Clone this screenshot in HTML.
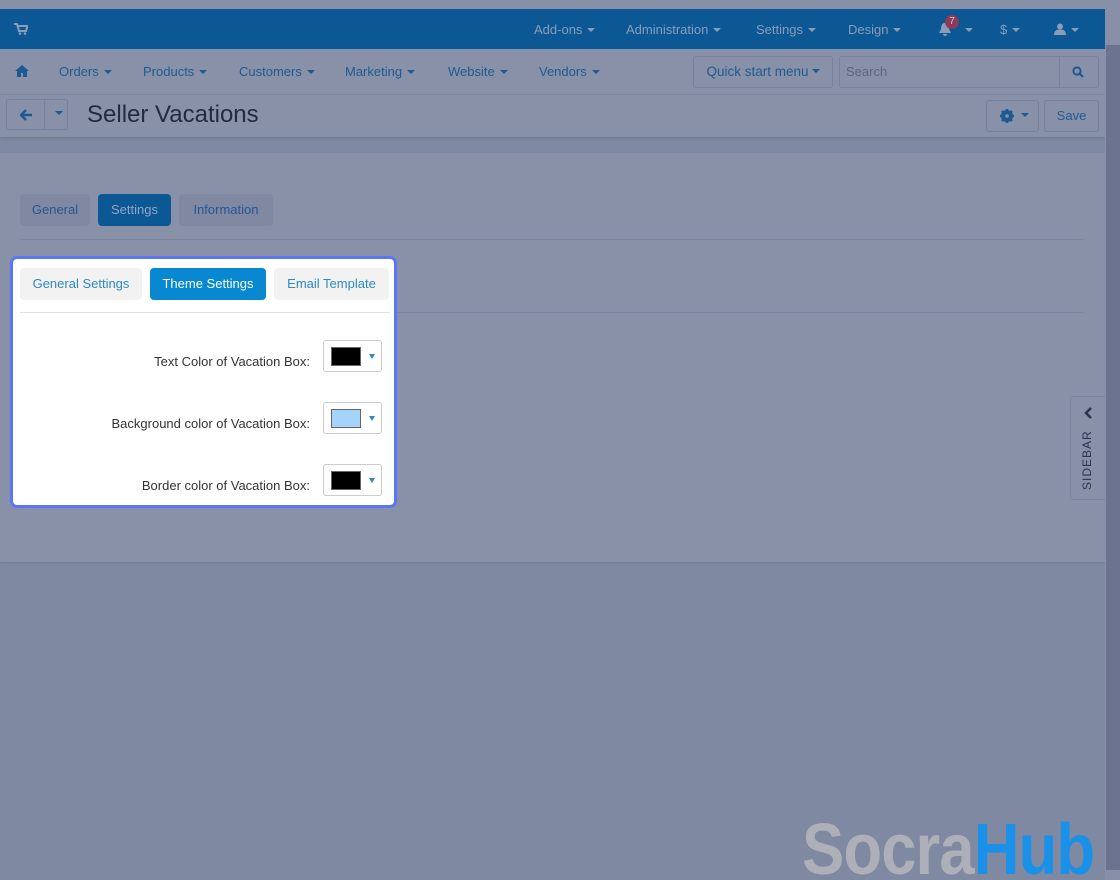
<!DOCTYPE html>
<html><head><meta charset="utf-8"><style>
*{box-sizing:border-box;margin:0;padding:0}
html,body{width:1120px;height:880px;overflow:hidden}
body{background:#7f89a1;font-family:"Liberation Sans",sans-serif;font-size:13px;position:relative}
.abs{position:absolute}
.top{left:0;top:0;width:1105px;height:9px;background:#8790a6}
.bar{left:0;top:9px;width:1105px;height:40px;background:#0b5894;color:#8a9cb8}
.bar span{position:absolute;top:13px;font-size:13px}
.car{display:inline-block;width:0;height:0;border-left:4px solid transparent;border-right:4px solid transparent;border-top:4px solid currentColor;vertical-align:middle;margin-left:5px;margin-top:-2px}
.nav{left:0;top:49px;width:1105px;height:46px;background:#8891a8;border-bottom:1px solid #8189a1;color:#1d5a94}
.nav span{position:absolute;top:15px}
.title{left:0;top:95px;width:1105px;height:42px;background:#8891a8;box-shadow:0 2px 3px rgba(0,0,0,.1)}
.btn{position:absolute;border:1px solid #7880a0;border-radius:3px;color:#1d5a94}
.content{left:0;top:153px;width:1105px;height:409px;background:#8891a8;box-shadow:0 1px 2px rgba(0,0,0,.1)}
.tab{position:absolute;top:194px;height:32px;border-radius:4px;background:#8189a2;color:#1f5893;line-height:32px;text-align:center}
.panel{left:10px;top:256px;width:387px;height:252px;background:#fff;border:3px solid #5a76f6;border-radius:7px}
.st{position:absolute;top:9px;height:32px;border-radius:4px;background:#f2f2f2;color:#2f8ac6;line-height:32px;text-align:center}
.lbl{position:absolute;right:84px;color:#333;font-size:13px}
.cp{position:absolute;left:310px;width:59px;height:32px;border:1px solid #ccc;border-radius:3px;background:#fff}
.cp i{position:absolute;left:7px;top:6px;width:30px;height:19px;border:1px solid #666}
.cp b{position:absolute;left:45px;top:13px;border-left:3px solid transparent;border-right:3px solid transparent;border-top:5px solid #2f8ac6}
.sb{left:1106px;top:45px;width:14px;height:825px;background:#6b7390}
</style></head><body>
<div class="abs top"></div>
<div class="abs bar">
<svg class="abs" style="left:14px;top:14px" width="14" height="12" viewBox="0 0 14 12"><path d="M0 1h3l2 7h7l1.5-5H4" fill="none" stroke="#8a9cb8" stroke-width="2"/><circle cx="6" cy="10.5" r="1.3" fill="#8a9cb8"/><circle cx="11" cy="10.5" r="1.3" fill="#8a9cb8"/></svg>
<span style="left:534px">Add-ons<i class="car"></i></span>
<span style="left:626px">Administration<i class="car"></i></span>
<span style="left:756px">Settings<i class="car"></i></span>
<span style="left:848px">Design<i class="car"></i></span>
<svg class="abs" style="left:938px;top:13px" width="14" height="15" viewBox="0 0 14 15"><path d="M7 1C4 1 3 4 3 7L1 11h12l-2-4C11 4 10 1 7 1zM5 12a2 2 0 004 0z" fill="#8a9cb8"/></svg>
<div class="abs" style="left:945px;top:6px;width:14px;height:14px;border-radius:7px;background:#8c3a57;color:#ccc;font-size:10px;text-align:center;line-height:14px">7</div>
<span style="left:960px"><i class="car"></i></span>
<span style="left:1000px">$<i class="car"></i></span>
<svg class="abs" style="left:1054px;top:14px" width="12" height="12" viewBox="0 0 12 12"><circle cx="6" cy="3.5" r="3" fill="#8a9cb8"/><path d="M0 12c0-4 2-5.5 6-5.5s6 1.5 6 5.5z" fill="#8a9cb8"/></svg>
<span style="left:1066px"><i class="car"></i></span>
</div>
<div class="abs nav">
<svg class="abs" style="left:15px;top:16px" width="14" height="12" viewBox="0 0 14 12"><path d="M7 0L0 6h2v6h4V8h2v4h4V6h2z" fill="#1d5a94"/></svg>
<span style="left:59px">Orders<i class="car"></i></span>
<span style="left:143px">Products<i class="car"></i></span>
<span style="left:239px">Customers<i class="car"></i></span>
<span style="left:345px">Marketing<i class="car"></i></span>
<span style="left:448px">Website<i class="car"></i></span>
<span style="left:539px">Vendors<i class="car"></i></span>
<div class="btn" style="left:693px;top:7px;width:140px;height:32px;line-height:30px;text-align:center;font-size:13.5px">Quick start menu<i class="car" style="margin-left:3px"></i></div>
<div class="btn" style="left:839px;top:7px;width:260px;height:32px;color:#5d6780;line-height:30px;padding-left:6px">Search</div>
<div class="abs" style="left:1059px;top:7px;width:1px;height:32px;background:#7880a0"></div>
<svg class="abs" style="left:1072px;top:17px" width="12" height="12" viewBox="0 0 12 12"><circle cx="5" cy="5" r="3.6" fill="none" stroke="#1d5a94" stroke-width="2"/><path d="M7.5 7.5l3.5 3.5" stroke="#1d5a94" stroke-width="2.2"/></svg>
</div>
<div class="abs title">
<div class="btn" style="left:6px;top:4px;width:62px;height:31px"></div>
<div class="abs" style="left:44px;top:5px;width:1px;height:30px;background:#7880a0"></div>
<svg class="abs" style="left:20px;top:14px" width="13" height="12" viewBox="0 0 13 12"><path d="M6 1L1 6l5 5M1.5 6H12" fill="none" stroke="#1d5a94" stroke-width="2.5"/></svg>
<i class="car abs" style="left:50px;top:18px;color:#1d5a94"></i>
<div class="abs" style="left:87px;top:6px;font-size:24px;color:#222c40">Seller Vacations</div>
<div class="btn" style="left:986px;top:5px;width:53px;height:32px"></div>
<svg class="abs" style="left:1000px;top:14px" width="14" height="14" viewBox="0 0 14 14"><circle cx="7" cy="7" r="4.5" fill="none" stroke="#1d5a94" stroke-width="3"/><path d="M7 0v14M0 7h14M2 2l10 10M12 2L2 12" stroke="#1d5a94" stroke-width="2.4"/><circle cx="7" cy="7" r="1.8" fill="#8891a8"/></svg>
<i class="car abs" style="left:1016px;top:20px;color:#1d5a94"></i>
<div class="btn" style="left:1044px;top:5px;width:55px;height:32px;line-height:30px;text-align:center">Save</div>
</div>
<div class="abs content"></div>
<div class="tab" style="left:20px;width:70px">General</div>
<div class="tab" style="left:98px;width:73px;background:#0b5894;color:#8ea7c5">Settings</div>
<div class="tab" style="left:179px;width:94px">Information</div>
<div class="abs" style="left:20px;top:239px;width:1064px;height:1px;background:#7c86a0"></div>
<div class="abs" style="left:20px;top:312px;width:1064px;height:1px;background:#7c86a0"></div>
<div class="abs panel">
<div class="st" style="left:7px;width:122px">General Settings</div>
<div class="st" style="left:137px;width:116px;background:#0788d0;color:#fff">Theme Settings</div>
<div class="st" style="left:261px;width:115px">Email Template</div>
<div class="abs" style="left:7px;top:53px;width:370px;height:1px;background:#dde3ea"></div>
<div class="lbl" style="top:95px">Text Color of Vacation Box:</div>
<div class="cp" style="top:81px"><i style="background:#000"></i><b></b></div>
<div class="lbl" style="top:157px">Background color of Vacation Box:</div>
<div class="cp" style="top:143px"><i style="background:#a5d4fa"></i><b></b></div>
<div class="lbl" style="top:219px">Border color of Vacation Box:</div>
<div class="cp" style="top:205px"><i style="background:#000"></i><b></b></div>
</div>
<div class="abs" style="left:1070px;top:396px;width:36px;height:104px;border:1px solid #7c86a0;border-right:none;border-radius:3px 0 0 3px;background:#8891a8"></div>
<svg class="abs" style="left:1083px;top:407px" width="10" height="12" viewBox="0 0 10 12"><path d="M8 1L3 6l5 5" fill="none" stroke="#2a3350" stroke-width="2.5"/></svg>
<div class="abs" style="left:1080px;top:490px;transform:rotate(-90deg);transform-origin:0 0;font-size:12px;letter-spacing:1px;color:#2a3350">SIDEBAR</div>
<div class="abs" style="left:802px;top:812px;font-size:72px;font-weight:bold;line-height:76px;letter-spacing:-1px;transform:scaleX(0.88);transform-origin:0 0;white-space:nowrap"><span style="color:#adb0b9">Socra</span><span style="color:#1991e8">Hub</span></div>
<div class="abs" style="left:1105px;top:0;width:15px;height:880px;background:#8790a6"></div>
<div class="abs sb"></div>
</body></html>
